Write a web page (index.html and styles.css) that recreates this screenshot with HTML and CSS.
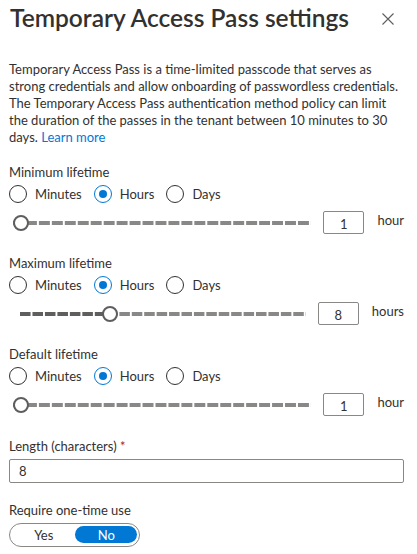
FILE: index.html
```html
<!DOCTYPE html>
<html>
<head>
<meta charset="utf-8">
<link rel="stylesheet" href="styles.css">
</head>
<body>
<div class="panel">
  <header class="header">
    <h1 class="title">Temporary Access Pass settings</h1>
    <svg class="close" width="12" height="12" viewBox="0 0 12 12"><path d="M0.5 0.5 L11.5 11.5 M11.5 0.5 L0.5 11.5" stroke="#605e5c" stroke-width="1.1" fill="none"/></svg>
  </header>
  <p class="intro"><span>Temporary Access Pass is a time-limited passcode that serves as strong credentials and allow onboarding of passwordless credentials. The Temporary Access Pass authentication method policy can limit the duration of the passes in the tenant between 10 minutes to 30</span> <span>days.</span> <a class="link" href="#">Learn more</a></p>

  <section class="section">
    <div class="label">Minimum lifetime</div>
    <div class="radios">
      <span class="radio"><span class="circle"></span><span class="rtext">Minutes</span></span>
      <span class="radio"><span class="circle on"></span><span class="rtext">Hours</span></span>
      <span class="radio"><span class="circle"></span><span class="rtext">Days</span></span>
    </div>
    <div class="slider-row">
      <div class="slider">
        <div class="track"></div>
        <div class="thumb" style="left: 0%"></div>
      </div>
      <div class="num">1</div>
      <div class="unit">hour</div>
    </div>
  </section>

  <section class="section">
    <div class="label">Maximum lifetime</div>
    <div class="radios">
      <span class="radio"><span class="circle"></span><span class="rtext">Minutes</span></span>
      <span class="radio"><span class="circle on"></span><span class="rtext">Hours</span></span>
      <span class="radio"><span class="circle"></span><span class="rtext">Days</span></span>
    </div>
    <div class="slider-row indent">
      <div class="slider">
        <div class="track"></div>
        <div class="fill" style="width: calc(8px + (100% - 16px) * 0.3043)"></div>
        <div class="thumb" style="left: calc((100% - 16px) * 0.3043)"></div>
      </div>
      <div class="num">8</div>
      <div class="unit">hours</div>
    </div>
  </section>

  <section class="section">
    <div class="label">Default lifetime</div>
    <div class="radios">
      <span class="radio"><span class="circle"></span><span class="rtext">Minutes</span></span>
      <span class="radio"><span class="circle on"></span><span class="rtext">Hours</span></span>
      <span class="radio"><span class="circle"></span><span class="rtext">Days</span></span>
    </div>
    <div class="slider-row">
      <div class="slider">
        <div class="track"></div>
        <div class="thumb" style="left: 0%"></div>
      </div>
      <div class="num">1</div>
      <div class="unit">hour</div>
    </div>
  </section>

  <div class="field">
    <div class="label">Length (characters) <span class="req">*</span></div>
    <div class="textbox">8</div>
  </div>

  <div class="field toggle-field">
    <div class="label">Require one-time use</div>
    <div class="toggle">
      <span class="seg">Yes</span>
      <span class="seg active">No</span>
    </div>
  </div>
</div>
</body>
</html>
```

FILE: styles.css
```css
* { box-sizing: border-box; }
html, body { margin: 0; padding: 0; background: #ffffff; }
body {
  font-family: Lato, "Liberation Sans", sans-serif;
  font-size: 13px;
  color: #323130;
  width: 417px;
  height: 554px;
  overflow: hidden;
}
.panel { padding: 2px 13px 0 9px; }

.header {
  display: flex;
  align-items: flex-start;
  justify-content: space-between;
  height: 32px;
}
.title {
  margin: 0 0 0 1px;
  font-size: 24.5px;
  font-weight: 600;
  line-height: 32px;
  color: #323130;
}
.close { margin-top: 11px; margin-right: 10px; }

.intro {
  margin: 26.5px 0 0 0;
  line-height: 17px;
}
.link { color: #0078d4; text-decoration: none; }

.section { margin-top: 18px; }
.section + .section { margin-top: 16px; }
.label { line-height: 17px; height: 17px; }

.radios {
  display: flex;
  align-items: center;
  height: 26px;
  gap: 12px;
}
.radio { display: flex; align-items: center; gap: 8px; }
.circle {
  width: 18px;
  height: 18px;
  border: 1px solid #323130;
  border-radius: 50%;
  display: flex;
  align-items: center;
  justify-content: center;
}
.circle.on { border-color: #0078d4; }
.circle.on::after {
  content: "";
  width: 8px;
  height: 8px;
  border-radius: 50%;
  background: #0078d4;
}

.slider-row {
  display: flex;
  align-items: center;
  height: 32px;
  padding-left: 4px;
}
.slider-row.indent { padding-left: 11px; }
.slider {
  flex: 1;
  position: relative;
  height: 16px;
  margin-right: 12px;
}
.track, .fill {
  position: absolute;
  left: 0;
  top: 6px;
  height: 4px;
}
.track {
  right: 0;
  background-image: linear-gradient(to right, #8a8886 0, #8a8886 calc(100% - 2px), transparent calc(100% - 2px));
  background-size: calc(100% / 23) 100%;
  background-repeat: repeat-x;
}
.fill {
  background-image: linear-gradient(to right, #605e5c 0, #605e5c calc(100% - 2px), #ffffff calc(100% - 2px));
  background-size: 12.48px 100%;
  background-repeat: repeat-x;
}
.thumb {
  position: absolute;
  top: 0;
  width: 16px;
  height: 16px;
  border: 2px solid #605e5c;
  border-radius: 50%;
  background: #ffffff;
}
.num {
  width: 41px;
  height: 23px;
  border: 1px solid #8a8886;
  border-radius: 2px;
  display: flex;
  align-items: center;
  justify-content: center;
  padding-top: 2px;
}
.unit {
  margin-left: 13px;
  margin-bottom: 5px;
}

.field { margin-top: 17px; }
.req { color: #a4262c; }
.textbox {
  margin-top: 4px;
  height: 24px;
  border: 1px solid #8a8886;
  border-radius: 2px;
  padding-left: 9px;
  display: flex;
  align-items: center;
}
.toggle-field { margin-top: 19px; }
.toggle {
  margin-top: 4px;
  width: 131px;
  height: 24px;
  border: 1px solid #8a8886;
  border-radius: 12px;
  display: flex;
  align-items: center;
  padding: 0 2px 0 2px;
}
.seg {
  height: 17px;
  border-radius: 9px;
  display: flex;
  align-items: center;
  justify-content: center;
  width: 64px;
}
.seg.active {
  width: 62px;
  background: #0078d4;
  color: #ffffff;
}
```
